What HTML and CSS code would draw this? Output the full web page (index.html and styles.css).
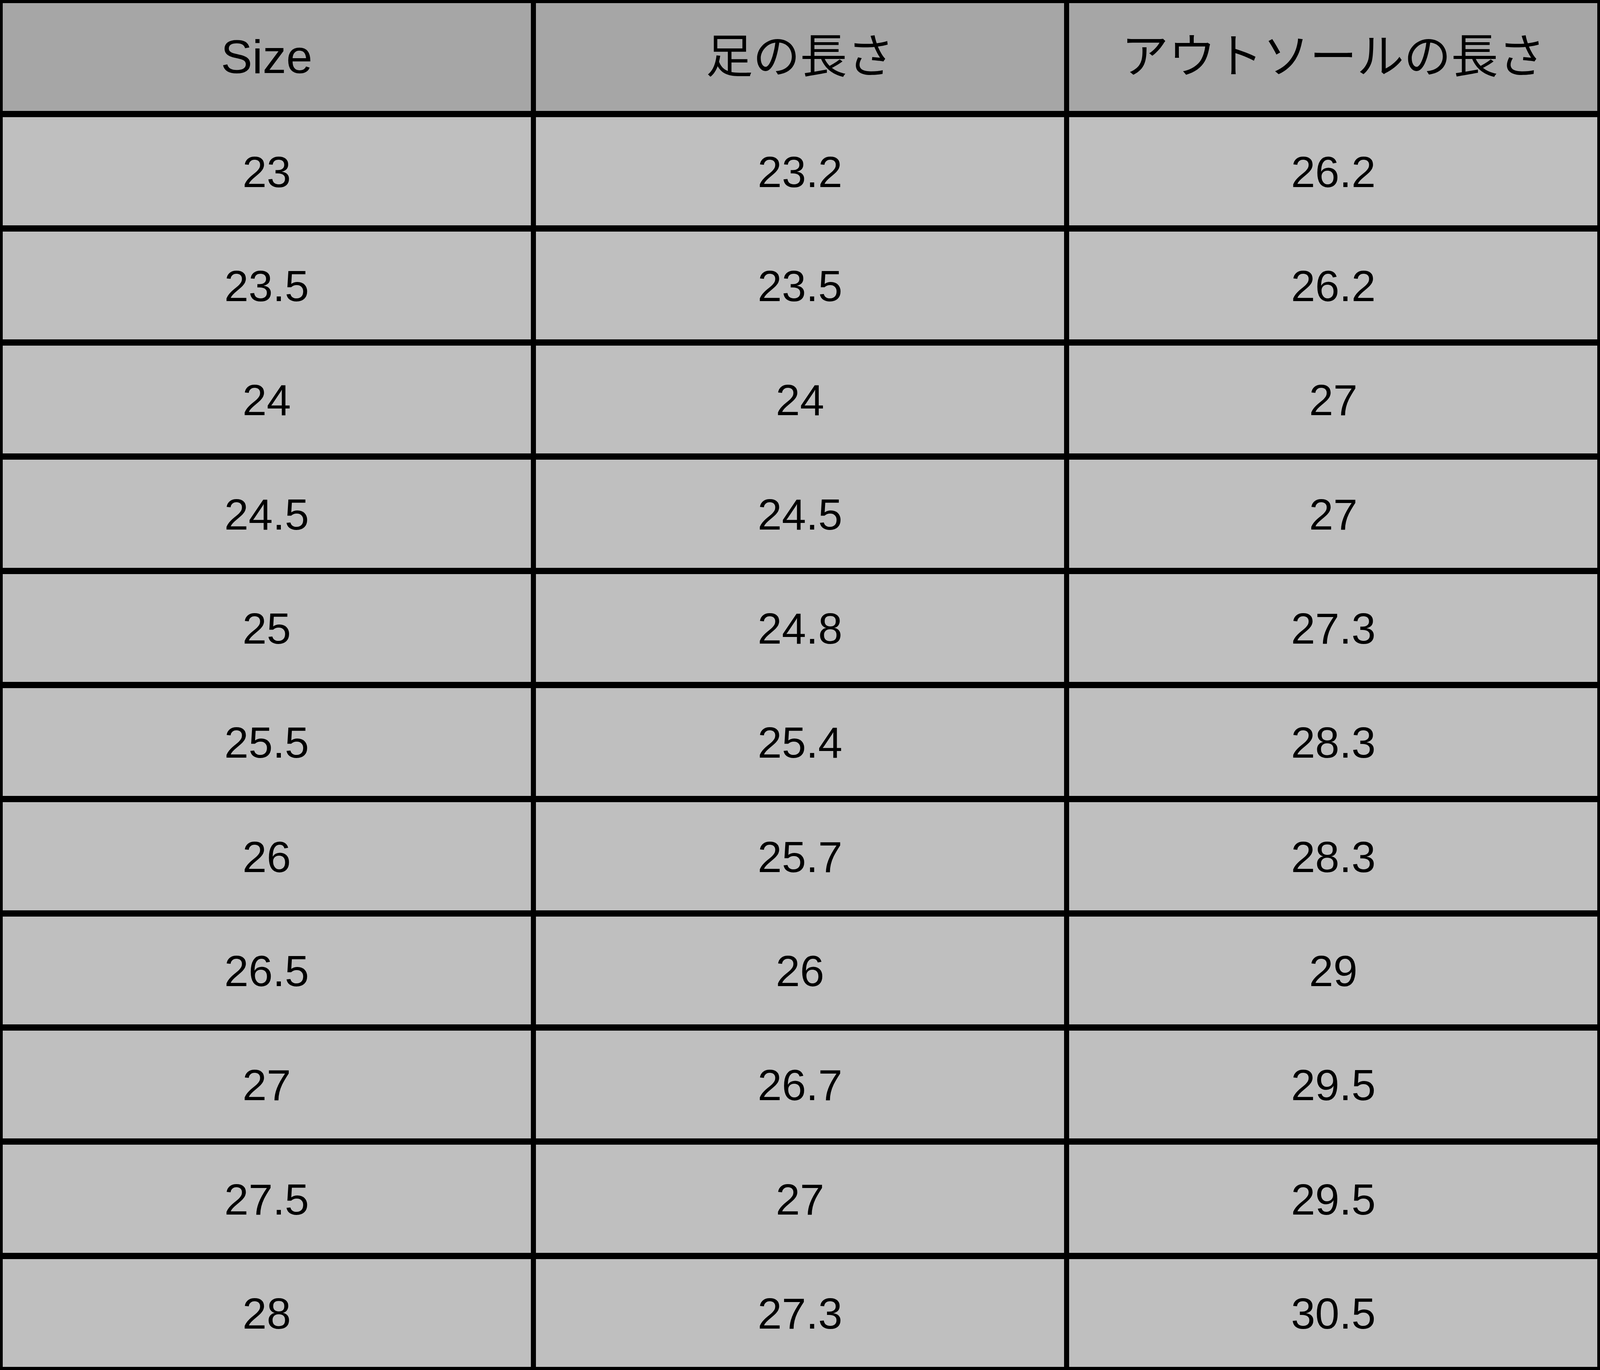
FILE: index.html
```html
<!DOCTYPE html>
<html lang="ja">
<head>
<meta charset="utf-8">
<meta name="viewport" content="width=device-width, initial-scale=1">
<title>Size</title>
<link rel="stylesheet" href="styles.css">
</head>
<body>
<div class="table">
  <div class="cell head">Size</div>
  <div class="cell head">足の長さ</div>
  <div class="cell head">アウトソールの長さ</div>

  <div class="cell">23</div><div class="cell">23.2</div><div class="cell">26.2</div>
  <div class="cell">23.5</div><div class="cell">23.5</div><div class="cell">26.2</div>
  <div class="cell">24</div><div class="cell">24</div><div class="cell">27</div>
  <div class="cell">24.5</div><div class="cell">24.5</div><div class="cell">27</div>
  <div class="cell">25</div><div class="cell">24.8</div><div class="cell">27.3</div>
  <div class="cell">25.5</div><div class="cell">25.4</div><div class="cell">28.3</div>
  <div class="cell">26</div><div class="cell">25.7</div><div class="cell">28.3</div>
  <div class="cell">26.5</div><div class="cell">26</div><div class="cell">29</div>
  <div class="cell">27</div><div class="cell">26.7</div><div class="cell">29.5</div>
  <div class="cell">27.5</div><div class="cell">27</div><div class="cell">29.5</div>
  <div class="cell">28</div><div class="cell">27.3</div><div class="cell">30.5</div>
</div>
</body>
</html>
```

FILE: styles.css
```css
html, body {
  margin: 0;
  padding: 0;
  background: #000;
  overflow: hidden;
}

.table {
  width: 100vw;
  height: 100vh;
  box-sizing: border-box;
  padding: 0.228vh 0.161vw;
  background: #000;
  display: grid;
  grid-template-columns: repeat(3, minmax(0, 1fr));
  grid-template-rows: repeat(12, minmax(0, 1fr));
  column-gap: 0.3225vw;
  row-gap: 0.456vh;
  font-family: "Liberation Sans", Arial, "Noto Sans CJK JP", sans-serif;
  color: #000;
}

.cell {
  background: #bfbfbf;
  display: flex;
  align-items: center;
  justify-content: center;
  font-size: 2.721vw;
  line-height: 1;
  padding-top: 0.1vw;
  box-sizing: border-box;
  white-space: nowrap;
}

.cell.head {
  background: #a6a6a6;
  font-size: 2.943vw;
  padding-top: 0;
}
```
